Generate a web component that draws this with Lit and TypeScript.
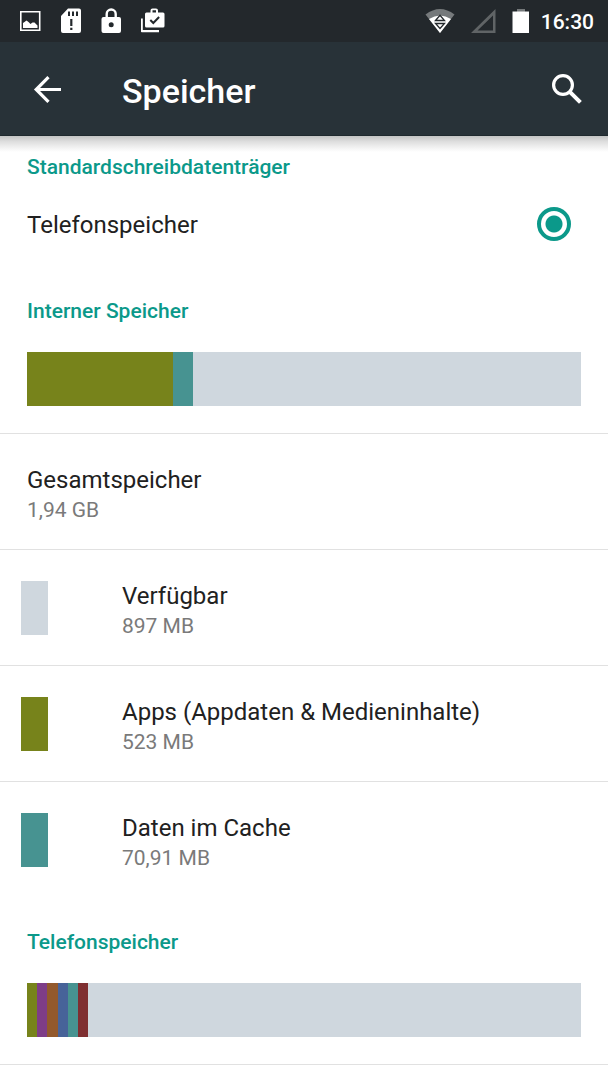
import { LitElement, html, css } from "lit";
import { customElement, property } from "lit/decorators.js";

interface Segment {
  color: string;
  share: number;
}

interface Entry {
  title: string;
  summary: string;
  color?: string;
}

const FREE = "#cfd7de";
const OLIVE = "#77831b";
const TEAL = "#479391";

const INTERNAL: Segment[] = [
  { color: OLIVE, share: 26.4 },
  { color: TEAL, share: 3.5 },
];

const PHONE: Segment[] = [
  { color: OLIVE, share: 1.84 },
  { color: "#7e3d87", share: 1.84 },
  { color: "#93592c", share: 1.84 },
  { color: "#476399", share: 1.84 },
  { color: TEAL, share: 1.84 },
  { color: "#7f2f31", share: 1.84 },
];

const ENTRIES: Entry[] = [
  { title: "Gesamtspeicher", summary: "1,94 GB" },
  { title: "Verfügbar", summary: "897 MB", color: FREE },
  { title: "Apps (Appdaten & Medieninhalte)", summary: "523 MB", color: OLIVE },
  { title: "Daten im Cache", summary: "70,91 MB", color: TEAL },
];

@customElement("status-bar")
export class StatusBar extends LitElement {
  static styles = css`
    :host {
      display: flex;
      align-items: center;
      justify-content: space-between;
      box-sizing: border-box;
      height: 42px;
      padding: 0 14px 0 20px;
      background: #23282c;
      color: #fff;
    }
    .group {
      display: flex;
      align-items: center;
    }
    .left {
      gap: 20px;
    }
    .right {
      gap: 16px;
    }
    svg {
      display: block;
      fill: currentColor;
    }
    .time {
      margin-left: -5px;
      padding-top: 2px;
      font-size: 21px;
      line-height: 28px;
      font-weight: 500;
    }
  `;

  render() {
    return html`
      <div class="group left">
        <svg width="21" height="26" viewBox="0 0 21 26" aria-hidden="true">
          <path fill-rule="evenodd" d="M0 3h20.500v20H0zM1.600 4.600v16.800h17.300V4.600z" />
          <path d="M3 20v-5l1.500-1 2-1.500 2 1.500 2 2 2-1.500h2l3 3v2.500z" />
        </svg>
        <svg width="20" height="26" viewBox="0 0 20 26" aria-hidden="true">
          <path fill-rule="evenodd" d="M7 0.500h11a2 2 0 0 1 2 2v20.500a2 2 0 0 1-2 2H2a2 2 0 0 1-2-2V8zM7 3.500v4.500h2V3.500zM11 3.500v4.500h2V3.500zM15 3.500v4.500h2V3.500zM9.200 11v7h2.200v-7zM9.200 19.800v2.200h2.200v-2.200z" />
        </svg>
        <svg width="20" height="26" viewBox="0 0 20 26" aria-hidden="true">
          <path fill-rule="evenodd" d="M2.500 9h2V6a5.700 5.700 0 0 1 11.400 0v3H18a2 2 0 0 1 2 2v12a2 2 0 0 1-2 2H2.500a2 2 0 0 1-2-2V11a2 2 0 0 1 2-2zM6.900 9h6.600V6a3.300 3.300 0 0 0-6.600 0zM10.200 14.200a2.500 2.500 0 1 0 0 5 2.500 2.500 0 0 0 0-5z" />
        </svg>
        <svg width="24" height="26" viewBox="1 0 24 26" aria-hidden="true">
          <path d="M0.500 10.500h2.300v11.500H19v2.300H2.500a2 2 0 0 1-2-2z" />
          <path fill-rule="evenodd" d="M6.500 4.500H10.500V2.500a2 2 0 0 1 2-2h3.500a2 2 0 0 1 2 2v2H23a1.500 1.500 0 0 1 1.500 1.500V18a1.500 1.500 0 0 1-1.500 1.500H6.500A1.500 1.500 0 0 1 5 18V6A1.500 1.500 0 0 1 6.500 4.500zM12.500 4.500H16V2.300h-3.500z" />
          <path d="M10.300 12l3 3 5.800-6" fill="none" stroke="#23282c" stroke-width="2" />
        </svg>
      </div>
      <div class="group right">
        <svg width="30" height="26" viewBox="0 0 30 26" aria-hidden="true">
          <path fill="#75797b" d="M0.500 6.500Q15-4.500 29.500 6.500L15 25z" />
          <path d="M4 11Q15 4 26 11L15 25z" />
          <path d="M10.500 12.500L15 7.300l4.500 5.200zM10.500 15.500h9L15 20.500z" fill="#fff" stroke="#23282c" stroke-width="1.300" />
        </svg>
        <svg width="25" height="26" viewBox="0 0 25 26" aria-hidden="true">
          <path fill="#606466" fill-rule="evenodd" d="M0 25L24.500 1v24zM6.500 22.500H22V7.500z" />
        </svg>
        <svg width="18" height="26" viewBox="0 0 18 26" aria-hidden="true">
          <path fill="#75797b" d="M5 1h8v4H5z" />
          <path d="M0.500 3.500h16.500V25H0.500z" />
        </svg>
        <span class="time">16:30</span>
      </div>
    `;
  }
}

@customElement("tool-bar")
export class ToolBar extends LitElement {
  @property() heading = "";

  static styles = css`
    :host {
      position: relative;
      display: flex;
      align-items: center;
      box-sizing: border-box;
      height: 95px;
      padding: 0 20px 0 27px;
      border-bottom: 2px solid #1f292e;
      background: #283238;
      color: #fff;
    }
    :host::after {
      content: "";
      position: absolute;
      top: 100%;
      left: 0;
      right: 0;
      height: 16px;
      margin-top: 1px;
      background: linear-gradient(#c3c4c4, #dedede 35%, #f3f3f3 75%, #fff);
    }
    h1 {
      flex: 1;
      margin: 0 0 0 54px;
      padding-top: 4px;
      font-size: 34px;
      line-height: 40px;
      font-weight: 500;
    }
    button {
      display: flex;
      padding: 0;
      border: 0;
      background: none;
      color: inherit;
    }
    svg {
      display: block;
    }
  `;

  render() {
    return html`
      <button type="button" aria-label="Zurück">
        <svg width="41" height="40" viewBox="0 0 41 40">
          <path d="M34 20.500H10M21.500 8.200L9.200 20.500l12.300 12.300" fill="none" stroke="currentColor" stroke-width="3.200" />
        </svg>
      </button>
      <h1>${this.heading}</h1>
      <button type="button" aria-label="Suchen">
        <svg width="41" height="40" viewBox="0 0 41 40">
          <circle cx="16" cy="16" r="9.400" fill="none" stroke="currentColor" stroke-width="3.200" />
          <path d="M22.800 22.800l10.600 10.600" stroke="currentColor" stroke-width="4" />
        </svg>
      </button>
    `;
  }
}

@customElement("usage-bar")
export class UsageBar extends LitElement {
  @property({ attribute: false }) segments: Segment[] = [];

  static styles = css`
    :host {
      display: block;
      padding: 27px;
      border-bottom: 1px solid #e1e1e1;
    }
    .track {
      display: flex;
      height: 54px;
      background: #cfd7de;
    }
  `;

  render() {
    return html`
      <div class="track">
        ${this.segments.map((s) => html`<div style="width:${s.share}%;background:${s.color}"></div>`)}
      </div>
    `;
  }
}

@customElement("app-root")
export class AppRoot extends LitElement {
  static styles = css`
    :host {
      display: block;
      min-height: 100vh;
      background: #fff;
      color: #212121;
      font-family: Roboto, sans-serif;
    }
    h2 {
      margin: 0;
      padding: 30px 27px 0;
      color: #0b998a;
      font-size: 21px;
      line-height: 28px;
      font-weight: 500;
    }
    .first {
      padding-top: 16px;
    }
    .choice {
      display: flex;
      align-items: center;
      justify-content: space-between;
      height: 86px;
      padding: 0 37px 0 27px;
      font-size: 24px;
      line-height: 30px;
    }
    .choice span {
      padding-top: 2px;
    }
    .choice input {
      appearance: none;
      box-sizing: border-box;
      width: 34px;
      height: 34px;
      margin: 0;
      border: 4px solid #0b998a;
      border-radius: 50%;
      background: radial-gradient(circle, #0b998a 8px, transparent 9px);
    }
    ul {
      margin: 0;
      padding: 0;
      list-style: none;
    }
    li {
      display: flex;
      align-items: center;
      box-sizing: border-box;
      height: 116px;
      padding: 0 27px;
      border-bottom: 1px solid #e1e1e1;
    }
    li:last-child {
      border-bottom: 0;
    }
    .swatched {
      gap: 74px;
      padding-left: 21px;
    }
    .swatch {
      width: 27px;
      height: 54px;
    }
    .title,
    .summary {
      line-height: 30px;
    }
    .title {
      padding-top: 6px;
      font-size: 24px;
    }
    .summary {
      color: #7a7a7a;
      font-size: 21px;
    }
  `;

  render() {
    return html`
      <status-bar></status-bar>
      <tool-bar heading="Speicher"></tool-bar>
      <main>
        <h2 class="first">Standardschreibdatenträger</h2>
        <label class="choice">
          <span>Telefonspeicher</span>
          <input type="radio" name="volume" checked />
        </label>
        <h2>Interner Speicher</h2>
        <usage-bar .segments=${INTERNAL}></usage-bar>
        <ul>
          ${ENTRIES.map(
            (e) => html`
              <li class=${e.color ? "swatched" : ""}>
                ${e.color ? html`<div class="swatch" style="background:${e.color}"></div>` : ""}
                <div>
                  <div class="title">${e.title}</div>
                  <div class="summary">${e.summary}</div>
                </div>
              </li>
            `
          )}
        </ul>
        <h2>Telefonspeicher</h2>
        <usage-bar .segments=${PHONE}></usage-bar>
      </main>
    `;
  }
}
